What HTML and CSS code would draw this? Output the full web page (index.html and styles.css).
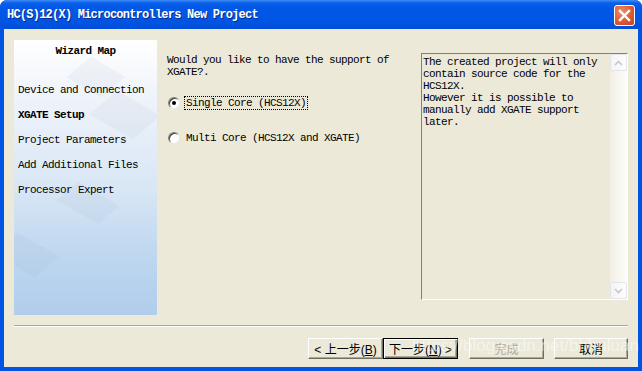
FILE: index.html
```html
<!DOCTYPE html>
<html lang="en">
<head>
    <meta charset="UTF-8">
    <title>HC(S)12(X) Microcontrollers New Project</title>
    <link rel="stylesheet" href="styles.css">
</head>
<body>
<div class="window">
    <div class="titlebar">
        <span class="title">HC(S)12(X) Microcontrollers New Project</span>
        <span class="close">
            <svg width="13" height="13" viewBox="0 0 13 13">
                <path d="M2 2 L11 11 M11 2 L2 11" stroke="#fff" stroke-width="2.4" stroke-linecap="square"/>
            </svg>
        </span>
    </div>
    <div class="client">
        <div class="main">
            <div class="wizard-map">
                <div class="shape s1"></div>
                <div class="shape s2"></div>
                <div class="shape s3"></div>
                <div class="shape s4"></div>
                <div class="map-title">Wizard Map</div>
                <ul class="steps">
                    <li>Device and Connection</li>
                    <li class="current">XGATE Setup</li>
                    <li>Project Parameters</li>
                    <li>Add Additional Files</li>
                    <li>Processor Expert</li>
                </ul>
            </div>
            <div class="options">
                <p class="question">Would you like to have the support of<br>XGATE?.</p>
                <div class="radio-row first">
                    <span class="radio checked"></span>
                    <span class="label focus">Single Core (HCS12X)</span>
                </div>
                <div class="radio-row second">
                    <span class="radio"></span>
                    <span class="label">Multi Core (HCS12X and XGATE)</span>
                </div>
            </div>
            <div class="info">
                <div class="info-text">The created project will only<br>contain source code for the<br>HCS12X.<br>However it is possible to<br>manually add XGATE support<br>later.</div>
                <div class="scrollbar">
                    <div class="sb-btn">
                        <svg width="9" height="6" viewBox="0 0 9 6"><path d="M1 5 L4.5 1.5 L8 5" fill="none" stroke="#c3c8d4" stroke-width="1.6"/></svg>
                    </div>
                    <div class="sb-track"></div>
                    <div class="sb-btn">
                        <svg width="9" height="6" viewBox="0 0 9 6"><path d="M1 1 L4.5 4.5 L8 1" fill="none" stroke="#c3c8d4" stroke-width="1.6"/></svg>
                    </div>
                </div>
            </div>
        </div>
        <div class="separator"></div>
        <div class="buttons">
            <button class="btn">&lt; 上一步(<u>B</u>)</button>
            <button class="btn default">下一步(<u>N</u>) &gt;</button>
            <button class="btn disabled finish">完成</button>
            <button class="btn cancel">取消</button>
        </div>
    </div>
    <div class="watermark">https://blog.csdn.net/bhhuluan</div>
</div>
</body>
</html>
```
FILE: styles.css
```css
*{
    margin: 0;
    padding: 0;
    box-sizing: border-box;
}
body{
    width: 642px;
    height: 371px;
    overflow: hidden;
    background: #fff;
}
.window{
    position: relative;
    width: 642px;
    height: 371px;
    background: #0054e3;
    border-radius: 7px 7px 0 0;
    padding: 0 4px 4px 4px;
    display: flex;
    flex-direction: column;
    font-family: "Liberation Mono", monospace;
    font-size: 11px;
    letter-spacing: -0.6px;
    color: #000;
}
.titlebar{
    height: 29px;
    margin: 0 -4px;
    padding: 0 6px 0 7px;
    display: flex;
    align-items: center;
    justify-content: space-between;
    border-radius: 7px 7px 0 0;
    background: linear-gradient(#3d8cf6 0, #0a5fea 3px, #0058e6 8px, #0055e5 20px, #004ed8 29px);
}
.title{
    color: #fff;
    font-weight: bold;
    font-size: 12px;
    letter-spacing: -0.77px;
    text-shadow: 1px 1px 0 #0a2a8a;
    padding-top: 1px;
}
.close{
    width: 21px;
    height: 21px;
    border: 1px solid #fff;
    border-radius: 3px;
    background: radial-gradient(circle at 35% 30%, #f08b6a, #df5a33 55%, #c2401d);
    display: flex;
    align-items: center;
    justify-content: center;
    margin-right: 1px;
    margin-top: 1px;
}
.client{
    flex: 1;
    background: #ece9d8;
    padding: 11px 10px 0 10px;
}
.main{
    display: flex;
    height: 275px;
}
.wizard-map{
    position: relative;
    overflow: hidden;
    width: 143px;
    flex: 0 0 143px;
    background: linear-gradient(#ffffff 0, #eef3fa 60px, #d8e6f5 150px, #c0d8f0 210px, #b0cdeb 275px);
}
.shape{
    position: absolute;
    background: rgba(140, 155, 175, 0.08);
    transform: rotate(30deg) skewX(-20deg);
}
.s1{ left: 62px; top: 22px; width: 40px; height: 30px; }
.s2{ left: 86px; top: 58px; width: 50px; height: 34px; }
.s3{ left: 50px; top: 150px; width: 48px; height: 26px; }
.s4{ left: -12px; top: 200px; width: 48px; height: 30px; }
.map-title{
    position: relative;
    padding-top: 5px;
    line-height: 12px;
    text-align: center;
    font-weight: bold;
}
.steps{
    position: relative;
    list-style: none;
    margin-top: 21px;
    padding-left: 4px;
}
.steps li{
    height: 25px;
    line-height: 25px;
    white-space: nowrap;
}
.steps .current{
    font-weight: bold;
}
.options{
    flex: 0 0 264px;
    padding-left: 10px;
    padding-top: 14px;
}
.question{
    line-height: 12px;
}
.radio-row{
    display: flex;
    align-items: center;
    height: 14px;
}
.radio-row.first{
    margin-top: 18px;
}
.radio-row.second{
    margin-top: 21px;
}
.radio{
    width: 12px;
    height: 12px;
    border-radius: 50%;
    border: 1px solid;
    border-color: #808080 #e8e8e8 #e8e8e8 #808080;
    background: #fff;
    box-shadow: inset 1px 1px 0 #404040;
    margin-left: 1px;
    margin-right: 4px;
    display: flex;
    align-items: center;
    justify-content: center;
}
.radio.checked::after{
    content: "";
    width: 4px;
    height: 4px;
    border-radius: 50%;
    background: #000;
}
.label{
    padding: 0 1px;
    border: 1px dotted transparent;
    line-height: 12px;
    white-space: nowrap;
}
.label.focus{
    border-color: #000;
}
.info{
    flex: 0 0 207px;
    margin-top: 13px;
    height: 247px;
    border: 1px solid;
    border-color: #808080 #fff #fff #808080;
    display: flex;
}
.info-text{
    flex: 1;
    padding: 2px 0 0 1px;
    line-height: 12px;
    white-space: nowrap;
}
.scrollbar{
    width: 17px;
    flex: 0 0 17px;
    display: flex;
    flex-direction: column;
    background: linear-gradient(to right, #f1efe4, #fdfdfa);
}
.sb-btn{
    height: 17px;
    border: 1px solid #e3e5ec;
    border-radius: 2px;
    background: linear-gradient(to right, #f4f4f2, #fdfdfd);
    display: flex;
    align-items: center;
    justify-content: center;
}
.sb-track{
    flex: 1;
}
.separator{
    margin-top: 10px;
    border-top: 1px solid #aca899;
    border-bottom: 1px solid #fff;
}
.buttons{
    display: flex;
    justify-content: flex-end;
    margin-top: 11px;
}
.btn{
    width: 75px;
    height: 21px;
    font-family: "Liberation Sans", "Noto Sans CJK SC", sans-serif;
    font-size: 12px;
    letter-spacing: 0;
    color: #000;
    background: #ece9d8;
    border: 1px solid;
    border-color: #fff #716f64 #716f64 #fff;
    box-shadow: inset -1px -1px 0 #aca899;
}
.btn u{
    text-decoration: underline;
}
.btn.default{
    border: 1px solid #000;
    box-shadow: inset 1px 1px 0 #fff, inset -1px -1px 0 #716f64, inset -2px -2px 0 #aca899;
}
.btn.disabled{
    color: #aca899;
}
.finish{
    margin-left: 11px;
}
.cancel{
    margin-left: 10px;
    width: 74px;
}
.watermark{
    position: absolute;
    left: 412px;
    top: 336px;
    font-family: "Liberation Sans", sans-serif;
    font-size: 17px;
    letter-spacing: 0;
    color: rgba(255, 255, 255, 0.5);
    white-space: nowrap;
}
```
